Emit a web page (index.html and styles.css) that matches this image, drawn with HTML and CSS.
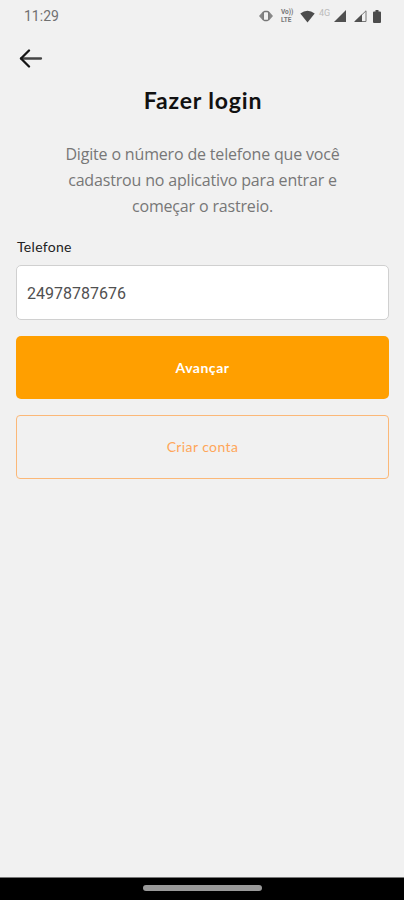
FILE: index.html
```
<!DOCTYPE html>
<html lang="pt-BR">
<head>
<meta charset="utf-8">
<title>Fazer login</title>
<link rel="stylesheet" href="styles.css">
</head>
<body>
<div class="screen">
  <header class="status">
    <span class="clock">11:29</span>
    <svg class="status-vibrate" width="14" height="12" viewBox="0 0 14 12"><path d="M4 1.500 0 6l4 4.500zM10 1.500 14 6l-4 4.500z" fill="#888"/><rect x="4.300" y="1.500" width="5.400" height="9" rx="1.500" fill="#f1f1f1" stroke="#777" stroke-width="1.300"/></svg>
    <span class="volte"><span>Vo))</span><span>LTE</span></span>
    <svg class="status-wifi" width="15" height="13" viewBox="0 0 15 13"><path d="M.3 3.500Q7.500-2 14.700 3.500L7.500 12.500z" fill="#4c4c4c"/></svg>
    <span class="network">4G</span>
    <svg class="status-signal" width="12" height="12" viewBox="0 0 12 12"><path d="M0 12 12 0v12z" fill="#505050"/></svg>
    <svg class="status-signal2" width="13" height="12" viewBox="0 0 13 12"><path d="M1 11.500 12 .8v10.700z" fill="none" stroke="#777"/><path d="M0 12 8 4.300V12z" fill="#505050"/></svg>
    <svg class="status-battery" width="8" height="13" viewBox="0 0 8 13"><path d="M2.500 0h3v1.500H7q1 0 1 1V12q0 1-1 1H1q-1 0-1-1V2.500q0-1 1-1h1.500z" fill="#4c4c4c"/></svg>
  </header>
  <nav class="nav">
    <svg width="24" height="20" viewBox="0 0 24 20" fill="none" stroke-linecap="round" stroke-linejoin="round"><path d="M2 9.500h20" stroke="#444" stroke-width="2.300"/><path d="M10 1.500 2 9.500l8 8" stroke="#151515" stroke-width="2.300"/></svg>
  </nav>
  <main class="content">
    <h1 class="title">Fazer login</h1>
    <p class="intro">Digite o número de telefone que você<br>cadastrou no aplicativo para entrar e<br>começar o rastreio.</p>
    <label class="label" for="phone">Telefone</label>
    <input class="field" id="phone" type="tel" value="24978787676">
    <button class="button primary">Avançar</button>
    <button class="button outline">Criar conta</button>
  </main>
  <footer class="gesture"><div class="handle"></div></footer>
</div>
</body>
</html>
```
FILE: styles.css
```
* { box-sizing: border-box; }
body { margin: 0; background: #f1f1f1; font-family: Lato, sans-serif; }
.screen { width: 404px; height: 900px; display: flex; flex-direction: column; overflow: hidden; }
.status { height: 32px; padding: 0 23px 0 24px; display: flex; align-items: center; flex: none; }
.status svg { flex: none; }
.clock { font: 14px/32px Roboto, sans-serif; color: #707070; margin-right: auto; }
.status-vibrate { margin-right: 8px; }
.volte { width: 14px; margin-right: 5px; display: flex; flex-direction: column; font: bold 6.5px/8px Roboto, sans-serif; color: #777; white-space: nowrap; }
.status-wifi { margin-right: 4px; }
.network { width: 13px; margin-right: 2px; font: 9px/10px Roboto, sans-serif; color: #bbb; padding-bottom: 6px; }
.status-signal { margin-right: 8px; }
.status-signal2 { margin-right: 6px; }
.nav { height: 52px; padding: 17px 0 0 19px; flex: none; }
.nav svg { display: block; }
.content { flex: 1; padding: 0 15px 0 16px; display: flex; flex-direction: column; }
.title { margin: 0; height: 32px; padding-left: 1px; font-size: 23px; line-height: 32px; font-weight: 700; letter-spacing: .85px; color: #111; text-align: center; }
.intro { margin: 25px 0 0; font: 16px/26px "Open Sans", sans-serif; letter-spacing: -.17px; color: #777; text-align: center; }
.label { margin-top: 18px; height: 20px; padding-left: 1px; font-size: 14px; line-height: 20px; letter-spacing: .3px; color: #222; }
.field { margin-top: 8px; width: 100%; height: 55px; border: 1px solid #d0d0d0; border-radius: 5px; background: #fff; padding: 2px 10px 0; font: 16px Roboto, sans-serif; color: #505050; outline: none; }
.button { width: 100%; border-radius: 5px; font-family: Lato, sans-serif; font-size: 14px; padding: 0 0 1px; }
.primary { margin-top: 16px; height: 63px; border: 0; background: #ff9f00; color: #fff; font-weight: 700; letter-spacing: .5px; }
.outline { margin-top: 16px; height: 64px; border: 1px solid #fbb878; border-radius: 4px; padding-bottom: 2px; background: transparent; color: #ffa659; letter-spacing: .4px; }
.gesture { height: 23px; flex: none; background: #000; border-top: 1px solid #777; display: flex; justify-content: center; align-items: flex-start; padding-top: 7px; }
.handle { width: 119px; height: 6px; border-radius: 3px; background: #999; }
```
